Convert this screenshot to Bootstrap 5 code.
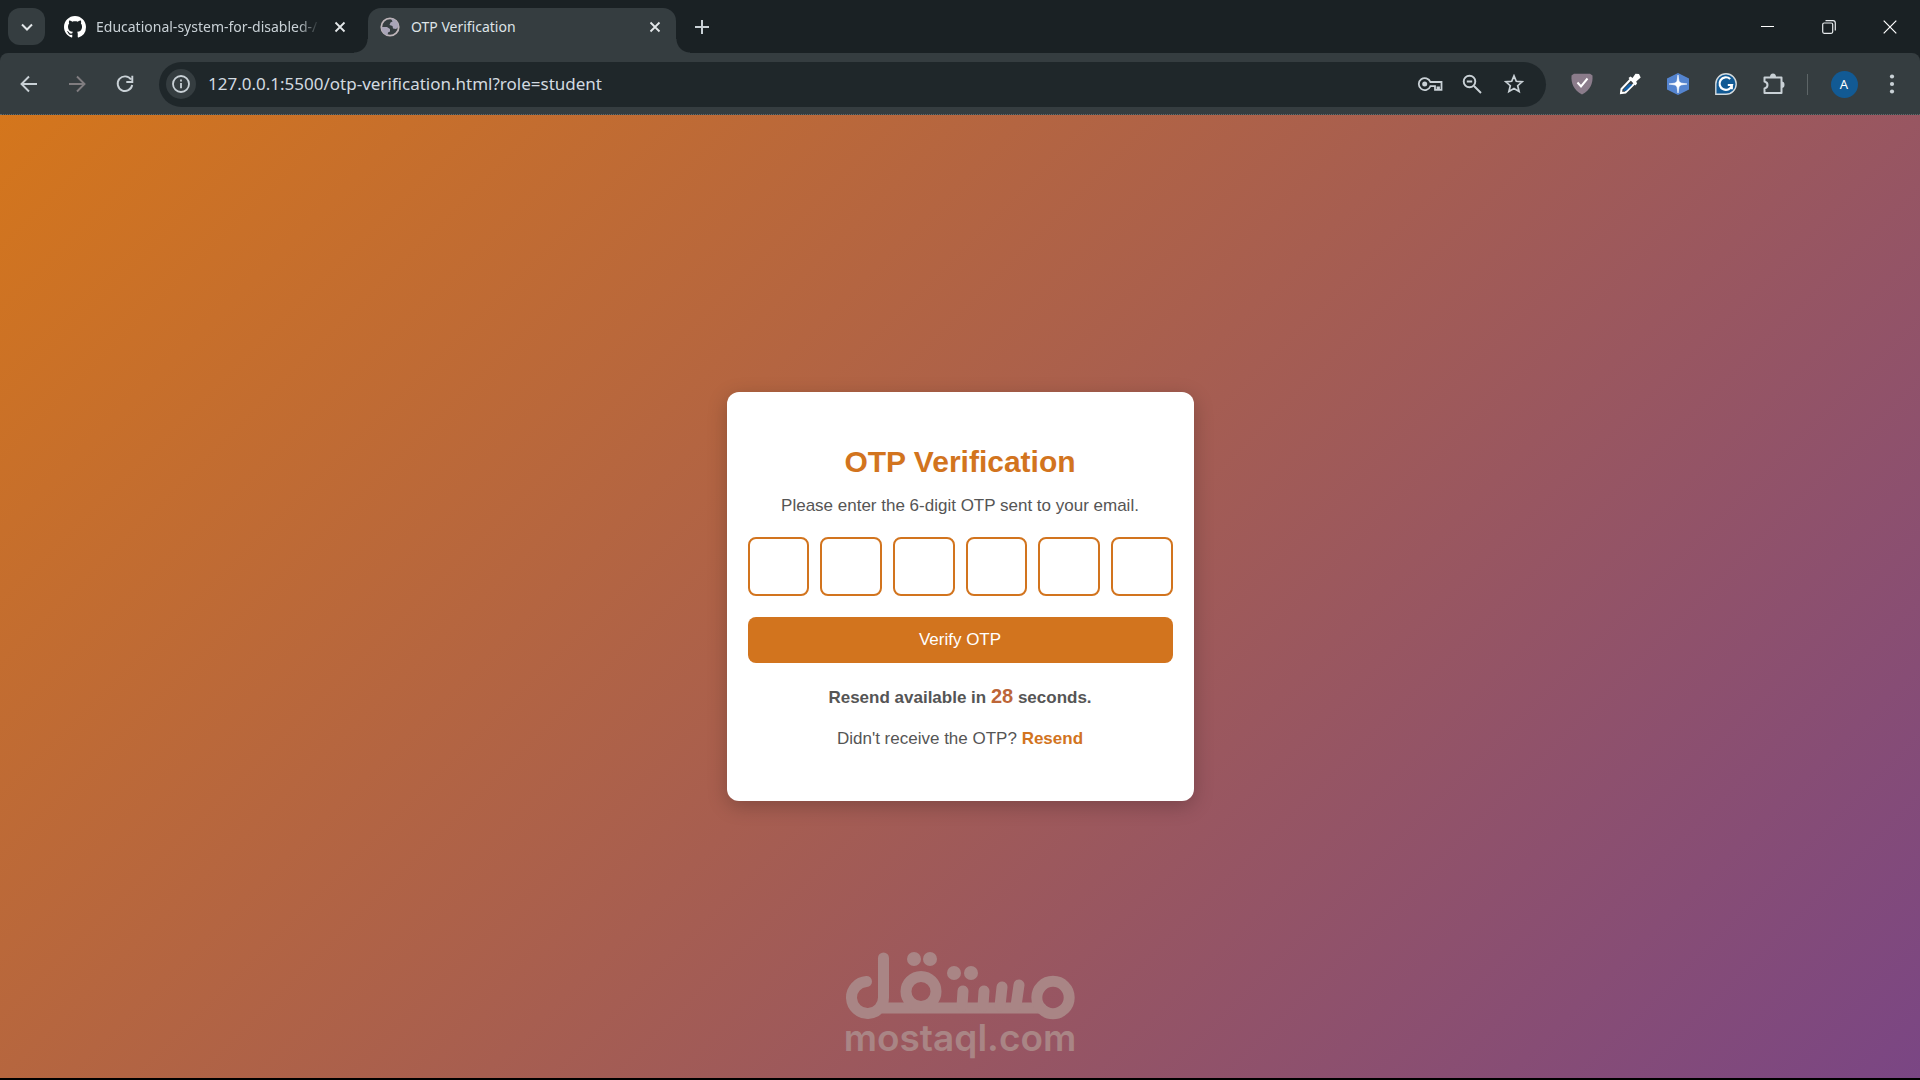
<!DOCTYPE html>
<html lang="en">
<head>
<meta charset="utf-8">
<meta name="viewport" content="width=device-width, initial-scale=1">
<title>OTP Verification</title>
<link href="https://cdn.jsdelivr.net/npm/bootstrap@5.3.0/dist/css/bootstrap.min.css" rel="stylesheet">
<style>
:root { --strip:#1a2124; --bar:#353d40; --omni:#1f272a; --ink:#c9d1d6; --brand:#d2741e; --copy:#555; }
body { min-height:100vh; background:#000; font-family:"Liberation Sans",Arial,sans-serif; font-size:17px; line-height:20px; }
button.plain, a.plain { border:0; background:none; padding:0; color:var(--ink); display:flex; align-items:center; justify-content:center; flex:none; }
.chrome { font-family:"Noto Sans","Open Sans",sans-serif; color:var(--ink); background:var(--strip); }
.strip { height:53px; padding:8px 0 0 8px; }
.strip button.tab-search { width:37px; height:37px; border-radius:12px; background:var(--bar); }
.browser-tab { width:308px; height:45px; padding:0 11px 8px; gap:10px; font-size:14px; position:relative; }
.browser-tab .tab-title { flex:1; min-width:0; white-space:nowrap; }
.browser-tab .faded { -webkit-mask-image:linear-gradient(90deg,#000 90%,transparent); mask-image:linear-gradient(90deg,#000 90%,transparent); }
.browser-tab.current { background:var(--bar); border-radius:13px 13px 0 0; color:#dfe4e7; margin-left:7px; }
.browser-tab.current::before, .browser-tab.current::after { content:""; position:absolute; bottom:0; width:14px; height:14px; }
.browser-tab.current::before { right:100%; background:radial-gradient(circle at 0 0,transparent 13px,var(--bar) 14px); }
.browser-tab.current::after { left:100%; background:radial-gradient(circle at 100% 0,transparent 13px,var(--bar) 14px); }
.tab-close { width:20px; height:20px; }
button.new-tab { width:28px; height:37px; margin-left:12px; }
button.win { width:61px; height:37px; color:#fff; }
.toolbar { height:62px; padding:1px 4px 0 5px; background:var(--bar); border-radius:8px 8px 0 0; border-bottom:1px dotted #626a6c; }
.toolbar .tool { width:48px; height:45px; }
.omnibox { height:45px; margin:0 12px 0 10px; padding:0 11px 0 7px; border-radius:23px; background:var(--omni); min-width:0; }
.omnibox .site-info { width:30px; height:30px; border-radius:50%; background:var(--bar); }
.omnibox input { border:0; outline:0; background:none; color:#d3dae0; font-size:17px; padding:0 0 0 12px; min-width:0; }
.omnibox .act { width:42px; height:45px; }
.divider { width:2px; height:21px; margin:0 11px 0 9px; border-left:1px solid #5d6567; }
.avatar { width:27px; height:27px; border-radius:50%; background:#125a94; color:#fff; font-size:13px; line-height:27px; }
.stage { position:relative; margin-bottom:2px; background:linear-gradient(135deg,#d4761c,#7a4684); }
.otp-card { width:467px; padding:50px 21px 52px; border-radius:12px; background:#fff; color:var(--copy); box-shadow:0 5px 20px rgba(0,0,0,.22); }
.otp-card h1 { font-size:30px; line-height:40px; font-weight:700; color:var(--brand); margin:0 0 14px; }
.otp-card p { margin:0; }
.digits { gap:11px; margin:21px 0; }
.digits input { min-width:0; flex:1 1 0; width:0; height:59px; border:2px solid var(--brand); border-radius:8px; text-align:center; font-size:22px; background:#fff; }
.btn-verify { --bs-btn-bg:var(--brand); --bs-btn-color:#fff; --bs-btn-hover-bg:#b9641a; --bs-btn-hover-color:#fff; --bs-btn-border-width:0; --bs-btn-font-size:17px; --bs-btn-border-radius:8px; height:46px; padding:0; }
.otp-card .wait { margin:22px 0 20px; line-height:22px; font-weight:700; }
.wait span { font-size:20px; color:#bd6638; }
.otp-card a { color:var(--brand); font-weight:700; text-decoration:none; }
.watermark { position:absolute; left:0; right:0; bottom:22px; color:#a98585; pointer-events:none; }
.watermark span { font:600 37px/36px Inter,sans-serif; }
</style>
<script src="https://cdn.jsdelivr.net/npm/bootstrap@5.3.0/dist/js/bootstrap.bundle.min.js"></script>
</head>
<body class="d-flex flex-column">
<header class="chrome">
  <div class="strip d-flex">
    <button class="plain tab-search me-2" aria-label="Search tabs"><svg width="14" height="14" viewBox="0 0 14 14" fill="none" stroke="#e3e7e9" stroke-width="2"><path d="M2 4.500l5 5 5-5"/></svg></button>
    <div class="browser-tab d-flex align-items-center">
      <svg width="22" height="22" viewBox="0 0 16 16" fill="#fff" class="flex-shrink-0"><path d="M8 0C3.58 0 0 3.58 0 8c0 3.54 2.29 6.53 5.47 7.59.4.07.55-.17.55-.38 0-.19-.01-.82-.01-1.49-2.01.37-2.53-.49-2.69-.94-.09-.23-.48-.94-.82-1.13-.28-.15-.68-.52-.01-.53.63-.01 1.08.58 1.23.82.72 1.21 1.87.87 2.33.66.07-.52.28-.87.51-1.07-1.78-.2-3.64-.89-3.64-3.95 0-.87.31-1.59.82-2.15-.08-.2-.36-1.02.08-2.12 0 0 .67-.21 2.2.82.64-.18 1.32-.27 2-.27s1.36.09 2 .27c1.53-1.04 2.2-.82 2.2-.82.44 1.1.16 1.92.08 2.12.51.56.82 1.27.82 2.15 0 3.07-1.87 3.75-3.65 3.95.29.25.54.73.54 1.48 0 1.07-.01 1.93-.01 2.2 0 .21.15.46.55.38A8.01 8.01 0 0 0 16 8c0-4.42-3.58-8-8-8z"/></svg>
      <span class="tab-title faded">Educational-system-for-disabled-/</span>
      <button class="plain tab-close" aria-label="Close tab"><svg width="12" height="12" viewBox="0 0 12 12" stroke="#e3e7e9" stroke-width="1.800"><path d="M1.500 1.500l9 9M10.500 1.500l-9 9"/></svg></button>
    </div>
    <div class="browser-tab current d-flex align-items-center">
      <svg width="22" height="22" viewBox="0 0 22 22" class="flex-shrink-0"><circle cx="11" cy="11" r="8.700" fill="#353d40" stroke="#bfb5b9" stroke-width="1.800"/><path d="M12 2.500c4 0 8 4 7.500 8.500l-2.500 2-3-.5-.5-2.500-3-1 1-2.500 2-1zM2.500 11h5.500l3 2v2.500l-2 1-.5 3C5 18.500 2.500 15 2.500 11z" fill="#a9a5b8"/></svg>
      <span class="tab-title">OTP Verification</span>
      <button class="plain tab-close" aria-label="Close tab"><svg width="12" height="12" viewBox="0 0 12 12" stroke="#e3e7e9" stroke-width="1.800"><path d="M1.500 1.500l9 9M10.500 1.500l-9 9"/></svg></button>
    </div>
    <button class="plain new-tab" aria-label="New tab"><svg width="14" height="14" viewBox="0 0 14 14" stroke="currentColor" stroke-width="2"><path d="M7 0v14M0 7h14"/></svg></button>
    <div class="d-flex ms-auto">
      <button class="plain win" aria-label="Minimize"><svg width="14" height="14" viewBox="0 0 14 14" stroke="#fff"><path d="M0 6.500h13"/></svg></button>
      <button class="plain win" aria-label="Restore"><svg width="14" height="14" viewBox="0 0 14 14" fill="none" stroke="#e8ecee" stroke-width="1.200"><rect x=".7" y="3" width="10" height="10.300" rx="1.500"/><path d="M3.500 .7H11a2.300 2.300 0 0 1 2.300 2.300v7.500"/></svg></button>
      <button class="plain win" aria-label="Close window"><svg width="14" height="14" viewBox="0 0 14 14" stroke="#fff" stroke-width="1.200"><path d="M.7 .7l12.600 12.600M13.300 .7L.7 13.300"/></svg></button>
    </div>
  </div>
  <div class="toolbar d-flex align-items-center">
    <button class="plain tool" aria-label="Back"><svg width="18" height="18" viewBox="0 0 18 18" fill="none" stroke="currentColor" stroke-width="1.900"><path d="M17 9H2M9 1.500L1.500 9 9 16.500"/></svg></button>
    <button class="plain tool" aria-label="Forward"><svg width="18" height="18" viewBox="0 0 18 18" fill="none" stroke="#807d80" stroke-width="1.900"><path d="M1 9h15M9 1.500L16.500 9 9 16.500"/></svg></button>
    <button class="plain tool" aria-label="Reload"><svg width="18" height="18" viewBox="0 0 18 18" fill="none" stroke="currentColor" stroke-width="1.900"><path d="M15 4.500A7.300 7.300 0 1 0 16.200 10M16.300 .8v6.200h-6"/></svg></button>
    <div class="omnibox d-flex align-items-center flex-grow-1">
      <button class="plain site-info" aria-label="View site information"><svg width="18" height="18" viewBox="0 0 18 18" fill="none" stroke="currentColor" stroke-width="1.800"><circle cx="9" cy="9" r="8"/><path d="M9 8v5.200M9 4.500v2"/></svg></button>
      <input class="flex-grow-1" type="text" aria-label="Address" value="127.0.0.1:5500/otp-verification.html?role=student">
      <button class="plain act" aria-label="Passwords"><svg width="26" height="16" viewBox="0 0 26 16" fill="none" stroke="currentColor" stroke-width="1.800"><path d="M13.400 6A6 6 0 1 0 13.400 10.200H18V13.800H20.500V11.500H22V13.800H24.500V6z"/><circle cx="7.700" cy="8" r="2.500" fill="currentColor" stroke="none"/></svg></button>
      <button class="plain act" aria-label="Zoom"><svg width="20" height="20" viewBox="0 0 20 20" fill="none" stroke="currentColor" stroke-width="1.900"><circle cx="7.500" cy="7.500" r="5.800"/><path d="M12 12l7 7M4.800 7.500h5.400"/></svg></button>
      <button class="plain act" aria-label="Bookmark"><svg width="20" height="20" viewBox="0 0 20 20" fill="none" stroke="currentColor" stroke-width="1.700"><path d="M10 1.800l2.300 5.500 5.900.5-4.500 3.900 1.400 5.800L10 14.400l-5.100 3.100 1.400-5.800L1.800 7.800l5.900-.5z"/></svg></button>
    </div>
    <button class="plain tool" aria-label="Shield extension"><svg width="22" height="22" viewBox="0 0 22 22"><path d="M0.500 2.500L3 .8h16l2.500 1.700c.5 8-2 14.500-10.500 19C2.500 17 0 10.500.5 2.500z" fill="#8b7c8b"/><path d="M6.500 9.500l3.500 4 6.500-8" fill="none" stroke="#fff" stroke-width="2"/></svg></button>
    <button class="plain tool" aria-label="Color picker"><svg width="22" height="22" viewBox="0 0 22 22"><path d="M2 20l.5-4 9.500-10 4 4-9.500 9.500z" fill="#353d40" stroke="#fff" stroke-width="2"/><path d="M4.500 18l.5-2 5-5 3.500.5-6 6z" fill="#125fa8"/><path d="M9.500 5l2-1.500 2 1.500 3-4.300 3.500.3 1.700 3.500-4.500 4 .8 2-1.500 2z" fill="#fff"/></svg></button>
    <button class="plain tool" aria-label="AI extension"><svg width="22" height="22" viewBox="0 0 22 22"><path d="M11 0l11 5.500v11L11 22 0 16.500v-11z" fill="#5484cf"/><path d="M11 2l1 6.200 1.800 1.800 6.200 1-6.200 1-1.800 1.800L11 20l-1-6.200L8.200 12 2 11l6.200-1L10 8.200z" fill="#fff" stroke="#fff" stroke-width=".6"/></svg></button>
    <button class="plain tool" aria-label="Writing assistant"><svg width="22" height="22" viewBox="0 0 22 22" fill="none"><path d="M.8 21.200V11A10.200 10.200 0 1 1 11 21.200z" fill="#125a94" stroke="#d4dadd" stroke-width="1.400"/><path d="M15.200 6A6.300 6.300 0 1 0 17 12h-4.200M16.800 12.200v4" stroke="#fff" stroke-width="2.200"/></svg></button>
    <button class="plain tool" aria-label="Extensions"><svg width="22" height="24" viewBox="0 0 22 24"><path d="M1.500 5.500h17v15.500h-17v-4.500c4-1 4-6 0-7z" fill="none" stroke="#c9d1d6" stroke-width="2" stroke-linejoin="round"/><path d="M7 5a3 3.500 0 0 1 6 0zM18.500 9.500a3 3.200 0 0 1 0 6.400z" fill="#c9d1d6"/></svg></button>
    <div class="divider"></div>
    <button class="plain tool" aria-label="Profile"><span class="avatar">A</span></button>
    <button class="plain tool" aria-label="Menu"><svg width="6" height="20" viewBox="0 0 6 20" fill="currentColor"><circle cx="3" cy="2.500" r="2.100"/><circle cx="3" cy="10" r="2.100"/><circle cx="3" cy="17.500" r="2.100"/></svg></button>
  </div>
</header>

<main class="stage flex-grow-1 d-flex align-items-center justify-content-center">
  <form class="otp-card text-center">
    <h1>OTP Verification</h1>
    <p>Please enter the 6-digit OTP sent to your email.</p>
    <div class="digits d-flex">
      <input type="text" maxlength="1" inputmode="numeric" aria-label="Digit 1">
      <input type="text" maxlength="1" inputmode="numeric" aria-label="Digit 2">
      <input type="text" maxlength="1" inputmode="numeric" aria-label="Digit 3">
      <input type="text" maxlength="1" inputmode="numeric" aria-label="Digit 4">
      <input type="text" maxlength="1" inputmode="numeric" aria-label="Digit 5">
      <input type="text" maxlength="1" inputmode="numeric" aria-label="Digit 6">
    </div>
    <button class="btn btn-verify w-100" type="submit">Verify OTP</button>
    <p class="wait">Resend available in <span>28</span> seconds.</p>
    <p>Didn't receive the OTP? <a href="#">Resend</a></p>
  </form>
  <div class="watermark d-flex flex-column align-items-center">
    <svg width="230" height="68" viewBox="0 0 230 68" fill="none" stroke="currentColor" stroke-width="11" stroke-linecap="round" role="img" aria-label="مستقل">
      <path d="M21.500 29.500A16 16 0 1 0 38.500 45V6M36 56H196"/>
      <circle cx="76" cy="39.500" r="15"/><circle cx="208" cy="45.500" r="16.200"/>
      <path d="M117 54l1-15M138 54l1-15M155 54l2-19M171 54l3-21"/>
      <g fill="currentColor" stroke="none"><circle cx="69" cy="7" r="7"/><circle cx="85" cy="7" r="7"/><circle cx="109" cy="21" r="7"/><circle cx="126" cy="21" r="7"/></g>
    </svg>
    <span>mostaql.com</span>
  </div>
</main>
</body>
</html>
